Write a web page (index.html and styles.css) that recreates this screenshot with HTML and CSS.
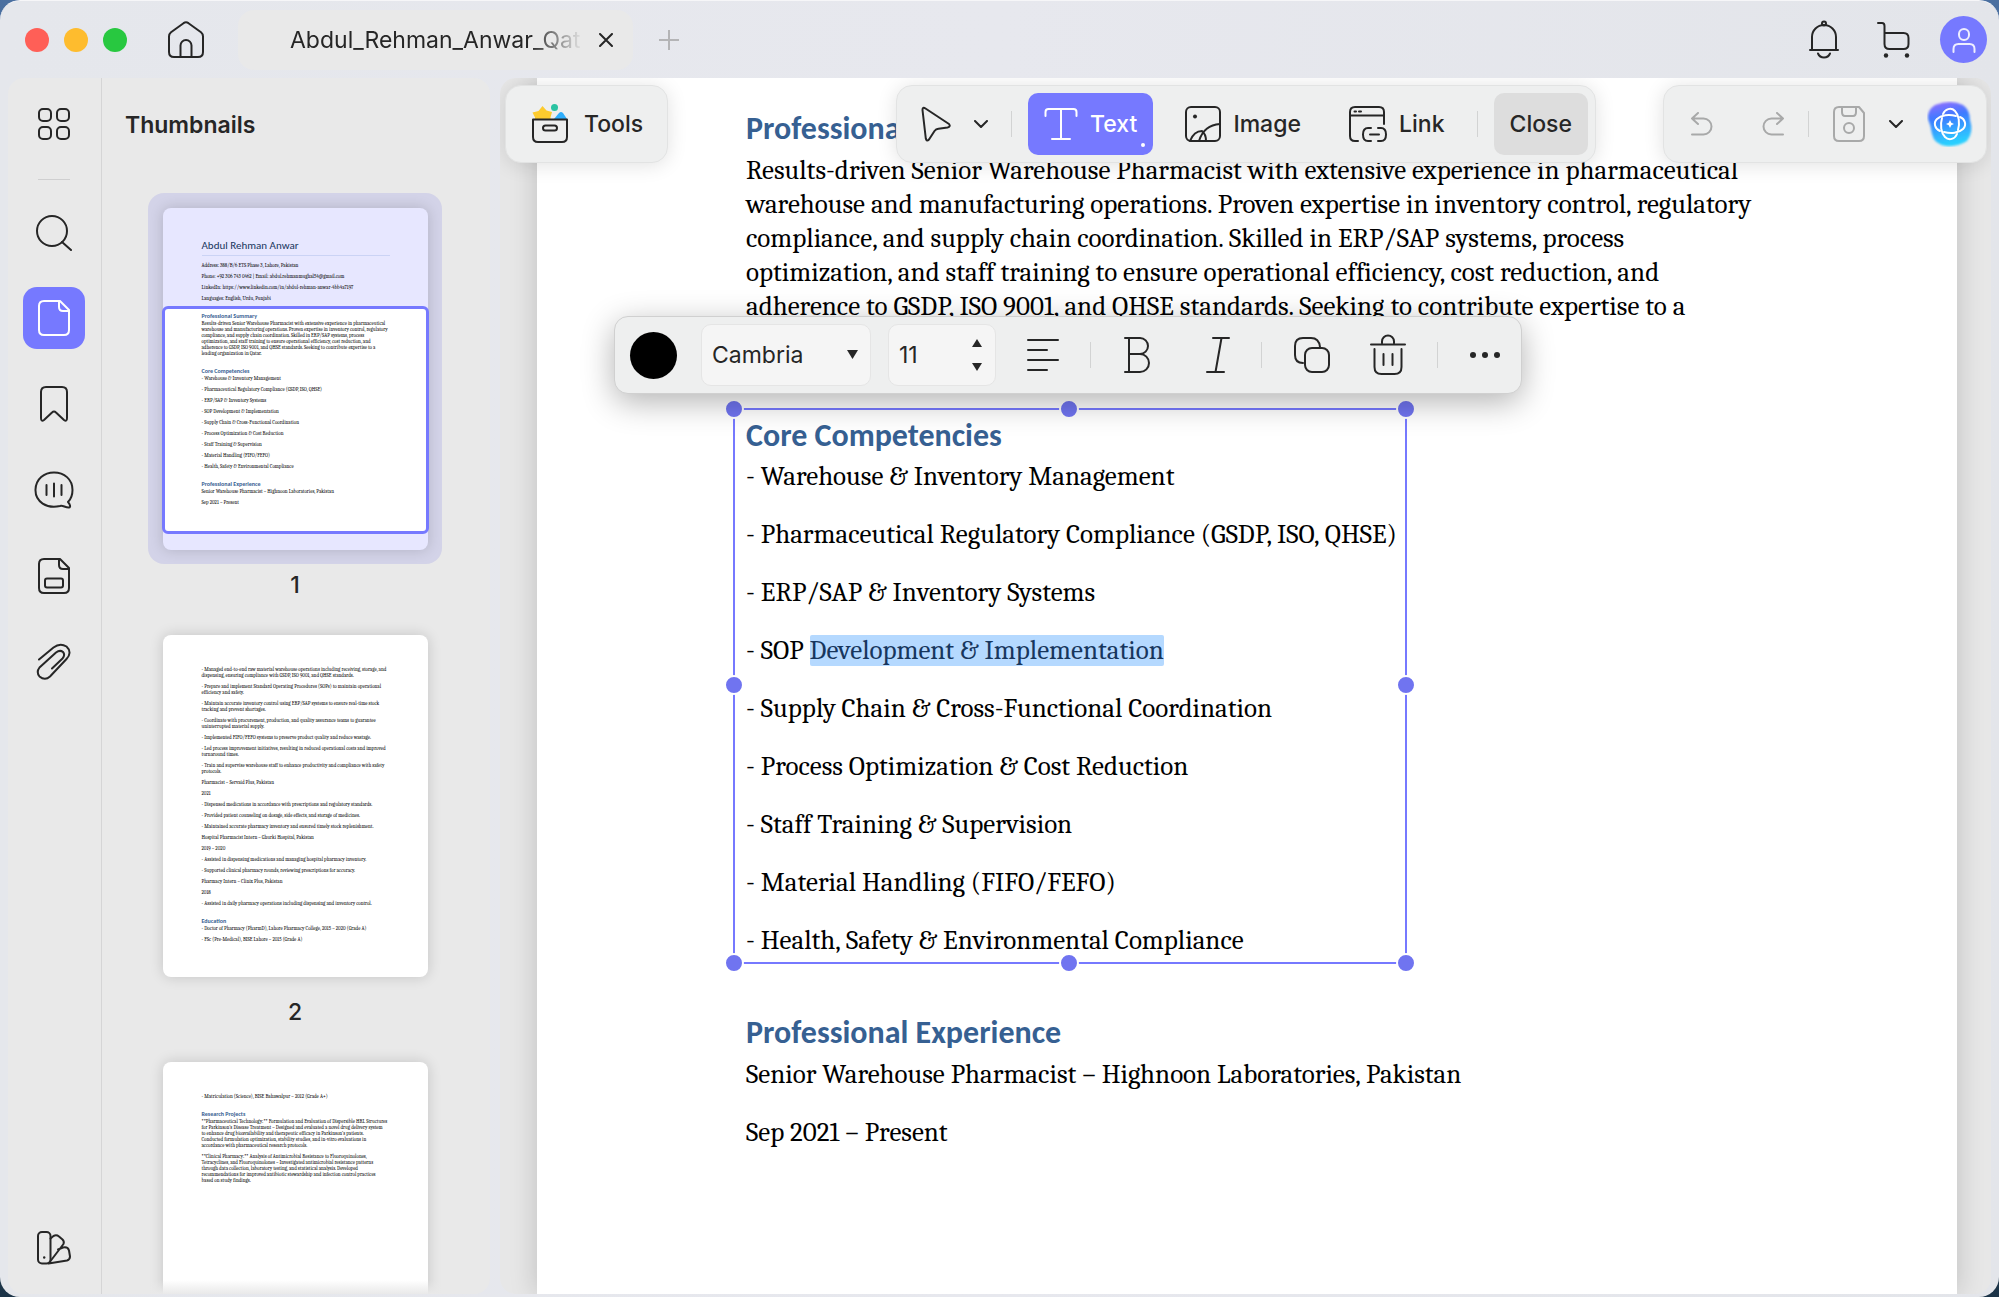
FILE: index.html
```html
<!DOCTYPE html>
<html lang="en">
<head>
    <meta charset="UTF-8">
    <title>Abdul_Rehman_Anwar_Qat</title>
    <link rel="stylesheet" href="styles.css">
</head>
<body>
<div class="window">

    <header class="titlebar">
        <div class="lights">
            <span class="light red"></span>
            <span class="light yellow"></span>
            <span class="light green"></span>
        </div>
        <button class="icon-btn home" aria-label="Home">
            <svg width="36" height="38" viewBox="0 0 36 38"><path d="M1 15.500Q1 13 3 11.300L15.500 2.200Q18 .5 20.500 2.200L33 11.300Q35 13 35 15.500V31Q35 36 30 36H6Q1 36 1 31ZM12.500 36V24.500a5.500 5.500 0 0 1 11 0V36"/></svg>
        </button>
        <div class="tab">
            <span class="tab-name">Abdul_Rehman_Anwar_Qat</span>
            <button class="icon-btn" aria-label="Close tab">
                <svg width="14" height="14" viewBox="0 0 14 14"><path d="M1 1l12 12M13 1L1 13"/></svg>
            </button>
        </div>
        <button class="icon-btn plus" aria-label="New tab">
            <svg width="20" height="20" viewBox="0 0 20 20"><path d="M10 0v20M0 10h20"/></svg>
        </button>
        <div class="account">
            <button class="icon-btn" aria-label="Notifications">
                <svg width="30" height="40" viewBox="0 0 30 40"><path d="M1 30h28M3 30V17a12 12 0 0 1 24 0v13M9 33.500a6.500 6.500 0 0 0 12 0"/><circle cx="15" cy="3.500" r="2"/></svg>
            </button>
            <button class="icon-btn" aria-label="Cart">
                <svg width="34" height="40" viewBox="0 0 34 40"><path d="M1 3h4q2.500 0 2.500 3v18q0 5 5 5h14q5 0 5-5v-6q0-5-5-5h-19"/><circle class="solid" cx="9" cy="35.500" r="2.200"/><circle class="solid" cx="30" cy="35.500" r="2.200"/></svg>
            </button>
            <button class="avatar" aria-label="Account">
                <svg width="24" height="26" viewBox="0 0 24 26"><rect x="7" y="2" width="10" height="11" rx="5"/><path d="M1.500 25v-3q0-5 5-5h11q5 0 5 5v3"/></svg>
            </button>
        </div>
    </header>

    <main class="workspace">

        <aside class="sidebar">
            <nav class="rail">
                <button class="rail-btn" aria-label="Apps">
                    <svg width="34" height="34" viewBox="0 0 34 34"><rect x="2" y="2" width="12" height="12" rx="4"/><rect x="20" y="2" width="12" height="12" rx="4"/><rect x="2" y="20" width="12" height="12" rx="4"/><rect x="20" y="20" width="12" height="12" rx="4"/></svg>
                </button>
                <span class="rail-line"></span>
                <button class="rail-btn" aria-label="Search">
                    <svg width="38" height="38" viewBox="0 0 38 38"><circle cx="17" cy="18" r="15"/><path d="M27 29l9 8"/></svg>
                </button>
                <button class="rail-btn selected" aria-label="Thumbnails">
                    <svg width="34" height="38" viewBox="0 0 34 38"><path d="M7 2h16l9 9v20q0 5-5 5H7q-5 0-5-5V7q0-5 5-5ZM22 2v6q0 4 4 4h6"/></svg>
                </button>
                <button class="rail-btn" aria-label="Bookmarks">
                    <svg width="30" height="38" viewBox="0 0 30 38"><path d="M2 7q0-5 5-5h16q5 0 5 5v26q0 4-3 2l-8-7.500q-2-2-4 0L5 35q-3 2-3-2Z"/></svg>
                </button>
                <button class="rail-btn" aria-label="Comments">
                    <svg width="40" height="38" viewBox="0 0 40 38"><path d="M34 31c2 2 3 5.500 1 5.500-4 .2-6-2.500-9-1.500C13 38 1 31 1.500 18.500 2 8 10 1.500 20 1.500S38.500 8 38.500 19c0 5-1.500 9-4.500 12ZM12.500 14v10M20 12.500v13M27.500 14v10"/></svg>
                </button>
                <button class="rail-btn" aria-label="Form fields">
                    <svg width="34" height="38" viewBox="0 0 34 38"><path d="M7 2h16l9 9v20q0 5-5 5H7q-5 0-5-5V7q0-5 5-5ZM22 2v6q0 4 4 4h6"/><rect x="8" y="21.500" width="18" height="9" rx="2"/></svg>
                </button>
                <button class="rail-btn" aria-label="Attachments">
                    <svg width="36" height="38" viewBox="0 0 36 38"><path d="M3 16.500L17.500 4.500Q24-.5 30.500 3.500c4.500 4 3.500 9 0 12.500L14 33.500q-5 4.500-10.500 0-3.500-4.500 0-9L20 9.500q4-3 7-.5 2.500 3-.5 6.500L16 25.500"/></svg>
                </button>
                <button class="rail-btn last" aria-label="Theme">
                    <svg width="36" height="36" viewBox="0 0 36 36"><rect x="2" y="2" width="12.500" height="31.500" rx="4"/><path d="M14.500 8.500l3-2.500q3-1.500 5.500.5l3.500 3q2 2 1 4.500L13 33M22 19.500l5-2q5-1 6 3l1 6q0 3-3 4L12.500 33.500"/><circle class="solid" cx="8.200" cy="27.500" r="1.200"/></svg>
                </button>
            </nav>

            <section class="thumbs">
                <h2>Thumbnails</h2>
                <div class="thumb-list">

                    <figure class="thumb current">
                        <div class="sheet">
                            <h3 class="name">Abdul Rehman Anwar</h3>
                            <p>Address: 388/B/6 ETS Phase 3, Lahore, Pakistan</p>
                            <p>Phone: +92 306 743 0462 | Email: abdul.rehmanmughal54@gmail.com</p>
                            <p>LinkedIn: https://www.linkedin.com/in/abdul-rehman-anwar-4bb4a7197</p>
                            <p>Languages: English, Urdu, Punjabi</p>
                            <div class="viewport">
                                <h4>Professional Summary</h4>
                                <p>Results-driven Senior Warehouse Pharmacist with extensive experience in pharmaceutical<br>
                                warehouse and manufacturing operations. Proven expertise in inventory control, regulatory<br>
                                compliance, and supply chain coordination. Skilled in ERP/SAP systems, process<br>
                                optimization, and staff training to ensure operational efficiency, cost reduction, and<br>
                                adherence to GSDP, ISO 9001, and QHSE standards. Seeking to contribute expertise to a<br>
                                leading organization in Qatar.</p>
                                <h4>Core Competencies</h4>
                                <p>- Warehouse &amp; Inventory Management</p>
                                <p>- Pharmaceutical Regulatory Compliance (GSDP, ISO, QHSE)</p>
                                <p>- ERP/SAP &amp; Inventory Systems</p>
                                <p>- SOP Development &amp; Implementation</p>
                                <p>- Supply Chain &amp; Cross-Functional Coordination</p>
                                <p>- Process Optimization &amp; Cost Reduction</p>
                                <p>- Staff Training &amp; Supervision</p>
                                <p>- Material Handling (FIFO/FEFO)</p>
                                <p>- Health, Safety &amp; Environmental Compliance</p>
                                <h4>Professional Experience</h4>
                                <p>Senior Warehouse Pharmacist – Highnoon Laboratories, Pakistan</p>
                                <p>Sep 2021 – Present</p>
                            </div>
                        </div>
                        <figcaption>1</figcaption>
                    </figure>

                    <figure class="thumb">
                        <div class="sheet">
                            <p>- Managed end-to-end raw material warehouse operations including receiving, storage, and<br>
                            dispensing, ensuring compliance with GSDP, ISO 9001, and QHSE standards.</p>
                            <p>- Prepare and implement Standard Operating Procedures (SOPs) to maintain operational<br>
                            efficiency and safety.</p>
                            <p>- Maintain accurate inventory control using ERP/SAP systems to ensure real-time stock<br>
                            tracking and prevent shortages.</p>
                            <p>- Coordinate with procurement, production, and quality assurance teams to guarantee<br>
                            uninterrupted material supply.</p>
                            <p>- Implemented FIFO/FEFO systems to preserve product quality and reduce wastage.</p>
                            <p>- Led process improvement initiatives, resulting in reduced operational costs and improved<br>
                            turnaround times.</p>
                            <p>- Train and supervise warehouse staff to enhance productivity and compliance with safety<br>
                            protocols.</p>
                            <p>Pharmacist – Servaid Plus, Pakistan</p>
                            <p>2021</p>
                            <p>- Dispensed medications in accordance with prescriptions and regulatory standards.</p>
                            <p>- Provided patient counseling on dosage, side effects, and storage of medicines.</p>
                            <p>- Maintained accurate pharmacy inventory and ensured timely stock replenishment.</p>
                            <p>Hospital Pharmacist Intern – Ghurki Hospital, Pakistan</p>
                            <p>2019 – 2020</p>
                            <p>- Assisted in dispensing medications and managing hospital pharmacy inventory.</p>
                            <p>- Supported clinical pharmacy rounds, reviewing prescriptions for accuracy.</p>
                            <p>Pharmacy Intern – Clinix Plus, Pakistan</p>
                            <p>2018</p>
                            <p>- Assisted in daily pharmacy operations including dispensing and inventory control.</p>
                            <h4>Education</h4>
                            <p>- Doctor of Pharmacy (PharmD), Lahore Pharmacy College, 2015 – 2020 (Grade A)</p>
                            <p>- FSc (Pre-Medical), BISE Lahore – 2015 (Grade A)</p>
                        </div>
                        <figcaption>2</figcaption>
                    </figure>

                    <figure class="thumb">
                        <div class="sheet">
                            <p>- Matriculation (Science), BISE Bahawalpur – 2012 (Grade A+)</p>
                            <h4>Research Projects</h4>
                            <p>**Pharmaceutical Technology:** Formulation and Evaluation of Dispersible HRL Structures<br>
                            for Parkinson's Disease Treatment – Designed and evaluated a novel drug delivery system<br>
                            to enhance drug bioavailability and therapeutic efficacy in Parkinson's patients.<br>
                            Conducted formulation optimization, stability studies, and in-vitro evaluations in<br>
                            accordance with pharmaceutical research protocols.</p>
                            <p>**Clinical Pharmacy:** Analysis of Antimicrobial Resistance to Fluoroquinolones,<br>
                            Tetracyclines, and Fluoroquinolones – Investigated antimicrobial resistance patterns<br>
                            through data collection, laboratory testing, and statistical analysis. Developed<br>
                            recommendations for improved antibiotic stewardship and infection control practices<br>
                            based on study findings.</p>
                        </div>
                    </figure>

                </div>
            </section>
        </aside>

        <section class="viewer">
            <article class="page">
                <h2>Professional Summary</h2>
                <p>Results-driven Senior Warehouse Pharmacist with extensive experience in pharmaceutical<br>
                warehouse and manufacturing operations. Proven expertise in inventory control, regulatory<br>
                compliance, and supply chain coordination. Skilled in ERP/SAP systems, process<br>
                optimization, and staff training to ensure operational efficiency, cost reduction, and<br>
                adherence to GSDP, ISO 9001, and QHSE standards. Seeking to contribute expertise to a<br>
                leading organization in Qatar.</p>

                <div class="selection">
                    <h2>Core Competencies</h2>
                    <p>- Warehouse &amp; Inventory Management</p>
                    <p>- Pharmaceutical Regulatory Compliance (GSDP, ISO, QHSE)</p>
                    <p>- ERP/SAP &amp; Inventory Systems</p>
                    <p>- SOP <mark>Development &amp; Implementation</mark></p>
                    <p>- Supply Chain &amp; Cross-Functional Coordination</p>
                    <p>- Process Optimization &amp; Cost Reduction</p>
                    <p>- Staff Training &amp; Supervision</p>
                    <p>- Material Handling (FIFO/FEFO)</p>
                    <p>- Health, Safety &amp; Environmental Compliance</p>
                    <span class="handle top start"></span>
                    <span class="handle top center"></span>
                    <span class="handle top end"></span>
                    <span class="handle middle start"></span>
                    <span class="handle middle end"></span>
                    <span class="handle bottom start"></span>
                    <span class="handle bottom center"></span>
                    <span class="handle bottom end"></span>

                    <!-- text format bar, floats above the selected block -->
                    <div class="format-bar">
                        <button class="swatch" aria-label="Text color"></button>
                        <label class="field font-field">
                            <select aria-label="Font">
                                <option>Cambria</option>
                            </select>
                            <svg width="14" height="12" viewBox="0 0 14 12"><path class="solid" d="M1 1h11L6.500 10Z"/></svg>
                        </label>
                        <div class="field size-field">
                            <input type="text" value="11" aria-label="Font size">
                            <div class="steps">
                                <button class="icon-btn" aria-label="Increase size"><svg width="12" height="10" viewBox="0 0 12 10"><path class="solid" d="M1 9h10L6 1Z"/></svg></button>
                                <button class="icon-btn" aria-label="Decrease size"><svg width="12" height="10" viewBox="0 0 12 10"><path class="solid" d="M1 1h10L6 9Z"/></svg></button>
                            </div>
                        </div>
                        <button class="icon-btn" aria-label="Align">
                            <svg width="32" height="34" viewBox="0 0 32 34"><path d="M1 2h30M1 12h19M1 22h30M1 32h19"/></svg>
                        </button>
                        <span class="split"></span>
                        <button class="icon-btn bold" aria-label="Bold">
                            <svg width="28" height="36" viewBox="0 0 28 36"><path d="M1 1h15a8 8 0 0 1 0 16H5M5 1v34M16 17a9 9 0 0 1 0 18H1"/></svg>
                        </button>
                        <button class="icon-btn" aria-label="Italic">
                            <svg width="24" height="36" viewBox="0 0 24 36"><path d="M7 1h16M1 35h17M15.500 1L9.500 35"/></svg>
                        </button>
                        <span class="split"></span>
                        <button class="icon-btn copy" aria-label="Duplicate">
                            <svg width="38" height="38" viewBox="0 0 38 38"><path d="M10 27Q2 27 2 19V10q0-8 8-8h8q8 0 9 9"/><rect x="12" y="12" width="24" height="24" rx="7"/></svg>
                        </button>
                        <button class="icon-btn" aria-label="Delete">
                            <svg width="36" height="42" viewBox="0 0 36 42"><path d="M1 10.500h34M12 9V7.500a6 6 0 0 1 12 0V9M4.500 15v18q0 7 7 7h13q7 0 7-7V15M13.500 20v11M22.500 20v11"/></svg>
                        </button>
                        <span class="split"></span>
                        <button class="icon-btn" aria-label="More">
                            <svg width="32" height="8" viewBox="0 0 32 8"><circle class="solid" cx="4" cy="4" r="3"/><circle class="solid" cx="16" cy="4" r="3"/><circle class="solid" cx="28" cy="4" r="3"/></svg>
                        </button>
                    </div>
                </div>

                <h2>Professional Experience</h2>
                <p>Senior Warehouse Pharmacist – Highnoon Laboratories, Pakistan</p>
                <p>Sep 2021 – Present</p>
            </article>

            <div class="bars">
                <button class="bar tools">
                    <svg width="36" height="40" viewBox="0 0 36 40">
                        <path fill="#fdcb2e" stroke="none" d="M10.500 2l4 4.500 5.500 1.500-1.500 5.500V16H3l0-2.500L.500 8.500l6-1.500Z"/>
                        <circle fill="#2ac3a2" stroke="none" cx="22.500" cy="3.500" r="3.500"/>
                        <path fill="#2eaefc" stroke="none" d="M22 15l5-6q2-2 4 0l4 6Z"/>
                        <path d="M1 15.500h34V33q0 5-5 5H6q-5 0-5-5Z"/><rect x="11" y="21.500" width="14" height="5" rx="2.500"/>
                    </svg>
                    Tools
                </button>

                <div class="bar edit-bar">
                    <button class="icon-btn" aria-label="Select">
                        <svg width="30" height="36" viewBox="0 0 30 36"><path d="M1.500 4q0-3.500 3-1.500L28 18q2 2.500-1.500 3.500l-9 1.200q-2.500.3-4 2.300L8 33.500q-2.500 2.500-3.200-1Z"/></svg>
                    </button>
                    <button class="icon-btn" aria-label="Select options">
                        <svg width="14" height="8" viewBox="0 0 14 8"><path d="M1 1l6 6 6-6"/></svg>
                    </button>
                    <span class="split"></span>
                    <div class="tool-group">
                        <button class="tool on">
                            <svg width="34" height="34" viewBox="0 0 34 34"><path d="M1.500 9V5q0-3 3-3h25q3 0 3 3v4M17 2v30M8 32h18"/></svg>
                            Text
                        </button>
                        <button class="tool">
                            <svg width="36" height="36" viewBox="0 0 36 36"><rect x="1" y="1" width="34" height="34" rx="5"/><circle class="solid" cx="10" cy="10.500" r="2"/><path d="M5 35Q9 25 17 25q4 3 4 10M14 35Q19 19 35 18"/></svg>
                            Image
                        </button>
                        <button class="tool">
                            <svg width="38" height="36" viewBox="0 0 38 36"><path d="M9 35H6q-5 0-5-5V6q0-5 5-5h24q5 0 5 5v12M1 9.500h34M5.500 5.500H7M10 5.500h2M22 35h-3q-5 0-5-6.500t5-6.500h3M29 22h3q5 0 5 6.500T32 35h-3M21 28.500h9"/></svg>
                            Link
                        </button>
                    </div>
                    <span class="split"></span>
                    <button class="tool close">Close</button>
                </div>

                <div class="bar file-bar">
                    <button class="icon-btn dim undo" aria-label="Undo">
                        <svg width="24" height="24" viewBox="0 0 24 24"><path d="M7 1L1 6.500 7 12M1 6.500h11.500a8 8 0 0 1 0 16H1"/></svg>
                    </button>
                    <button class="icon-btn dim" aria-label="Redo">
                        <svg width="24" height="24" viewBox="0 0 24 24"><path d="M17 1l6 5.500-6 5.500M23 6.500H11.500a8 8 0 0 0 0 16H23"/></svg>
                    </button>
                    <span class="split"></span>
                    <button class="icon-btn dim" aria-label="Save">
                        <svg width="32" height="36" viewBox="0 0 32 36"><path d="M6 1h20l5 6v23q0 5-5 5H6q-5 0-5-5V6q0-5 5-5ZM9 1v5q0 4 3 4h8q3 0 3-4V1"/><circle cx="16" cy="22" r="5"/></svg>
                    </button>
                    <button class="icon-btn" aria-label="Save options">
                        <svg width="14" height="8" viewBox="0 0 14 8"><path d="M1 1l6 6 6-6"/></svg>
                    </button>
                    <button class="icon-btn" aria-label="AI assistant">
                        <svg width="46" height="46" viewBox="0 0 46 46">
                            <defs>
                                <linearGradient id="aiFill" x1="0" y1="0" x2="0.2" y2="1">
                                    <stop offset="0" stop-color="#9a6cff"/>
                                    <stop offset="0.400" stop-color="#3d7bff"/>
                                    <stop offset="1" stop-color="#2bd0ff"/>
                                </linearGradient>
                                <filter id="aiSoft"><feGaussianBlur stdDeviation="0.800"/></filter>
                            </defs>
                            <path fill="url(#aiFill)" stroke="none" filter="url(#aiSoft)" d="M8 4Q24-2 36 4q7 5 7 15 4 12-3 21-9 6-21 5Q7 43 5 33 4 25 1 18 0 9 8 4Z"/>
                            <g class="orbit">
                                <path d="M16 13c2-5 8-7 12-3 4 4 5 12 3 19"/>
                                <path d="M33 16c5 2 7 8 3 12-4 4-12 5-19 3"/>
                                <path d="M30 33c-2 5-8 7-12 3-4-4-5-12-3-19"/>
                                <path d="M13 30c-5-2-7-8-3-12 4-4 12-5 19-3"/>
                            </g>
                            <path fill="#fff" stroke="none" d="M23 19l1.300 2.700L27 23l-2.700 1.300L23 27l-1.300-2.700L19 23l2.700-1.300Z"/>
                        </svg>
                    </button>
                </div>
            </div>
        </section>

    </main>
</div>
</body>
</html>
```

FILE: styles.css
```css
* {
    box-sizing: border-box;
}

body {
    margin: 0;
    font-family: Inter, "Liberation Sans", sans-serif;
    font-size: 23px;
    color: #262626;
    background: linear-gradient(#4a6fa0, #1c3448);
}

h2, h3, h4, p, figure {
    margin: 0;
}

button {
    font: inherit;
    color: inherit;
    background: none;
    border: none;
    padding: 0;
}

svg {
    display: block;
    flex-shrink: 0;
    fill: none;
    stroke: currentColor;
    stroke-width: 2;
    stroke-linecap: round;
    stroke-linejoin: round;
}

.solid {
    fill: currentColor;
    stroke: none;
}

.icon-btn {
    display: flex;
    align-items: center;
    justify-content: center;
}

.window {
    height: 100vh;
    display: flex;
    flex-direction: column;
    overflow: hidden;
    border-radius: 20px;
    border-top: 1px solid #f6f6f8;
    background: linear-gradient(90deg, #e5e7ec, #e7e8ee 50%, #e3e5ea);
}

/* title bar */
.titlebar {
    display: flex;
    align-items: center;
    flex-shrink: 0;
    height: 77px;
    padding: 0 12px 0 25px;
}

.lights {
    display: flex;
    gap: 15px;
}

.light {
    width: 24px;
    height: 24px;
    border-radius: 50%;
}

.red { background: #ff5f57; }
.yellow { background: #febc2e; }
.green { background: #28c840; }

.home {
    margin: 0 34px 0 41px;
}

.tab {
    display: flex;
    align-items: center;
    gap: 16px;
    width: 395px;
    height: 60px;
    padding: 0 20px 0 52px;
    border-radius: 16px;
    background: #e9e9e9;
}

.tab-name {
    flex: 1;
    white-space: nowrap;
    -webkit-mask-image: linear-gradient(90deg, #000 82%, transparent);
    mask-image: linear-gradient(90deg, #000 82%, transparent);
}

.plus {
    margin-left: 26px;
    color: #b4b4b6;
}

.account {
    display: flex;
    align-items: center;
    gap: 38px;
    margin-left: auto;
}

.avatar {
    display: flex;
    align-items: center;
    justify-content: center;
    width: 47px;
    height: 47px;
    margin-left: -9px;
    border-radius: 50%;
    color: #eeeeff;
    background: #7679ff;
}

/* sidebar */
.workspace {
    display: flex;
    flex: 1;
    gap: 10px;
    min-height: 0;
    padding: 0 8px 3px;
}

.sidebar {
    display: flex;
    width: 482px;
    flex-shrink: 0;
    overflow: hidden;
    border-radius: 16px;
    background: #e9e9e9;
}

.rail {
    display: flex;
    flex-direction: column;
    align-items: center;
    gap: 24px;
    width: 94px;
    padding: 15px 2px 15px 0;
    border-right: 1px solid #d5d5d6;
}

.rail-btn {
    display: flex;
    align-items: center;
    justify-content: center;
    flex-shrink: 0;
    width: 62px;
    height: 62px;
    border-radius: 14px;
}

.rail-line {
    width: 32px;
    height: 1px;
    margin-bottom: -3px;
    background: #cfcfd0;
}

.selected {
    color: #fff;
    background: #7679ff;
}

.last {
    margin-top: auto;
}

.thumbs {
    position: relative;
    flex: 1;
    overflow: hidden;
}

.thumbs::after {
    content: "";
    position: absolute;
    left: 0;
    right: 0;
    bottom: 0;
    height: 14px;
    background: linear-gradient(transparent, #e9e9e9);
}

.thumbs h2 {
    padding: 30px 23px 0;
    font-size: 23px;
    font-weight: 600;
    line-height: 34px;
}

.thumb-list {
    display: flex;
    flex-direction: column;
    align-items: center;
    margin-top: 51px;
    padding-right: 2px;
}

.thumb {
    display: flex;
    flex-direction: column;
    align-items: center;
    width: 294px;
    padding: 15px;
    border-radius: 16px;
}

.thumb figcaption {
    height: 40px;
    margin-top: 16px;
    margin-bottom: -1px;
    font-weight: 500;
    line-height: 38px;
}

.current {
    height: 371px;
    margin-bottom: 56px;
    background: #d3d3e8;
}

.sheet {
    flex-shrink: 0;
    width: 265px;
    height: 342px;
    padding: 31px 0 0 39px;
    border-radius: 8px;
    overflow: hidden;
    background: #fff;
    box-shadow: 0 0 14px rgba(0, 0, 0, 0.16);
    font: 5px/6px Cambria, "Liberation Serif", serif;
    color: #000;
    white-space: nowrap;
}

.sheet p {
    margin-bottom: 5px;
}

.sheet h4 {
    margin-top: 12px;
    font: bold 6px/7px Calibri, Lato, sans-serif;
    color: #366092;
}

.current .sheet {
    padding-top: 30px;
    overflow: visible;
    background: #e7e7ff;
}

.sheet .name {
    width: 188px;
    margin-bottom: 6px;
    padding-bottom: 2px;
    border-bottom: 1px solid #cbd3f5;
    font: 11px/15px Calibri, Lato, sans-serif;
    color: #17365d;
}

.viewport {
    width: 267px;
    height: 228px;
    margin: 0 0 0 -40px;
    padding: 4px 0 0 37px;
    border: 3px solid #7679ff;
    border-radius: 6px;
    background: #fff;
}

.viewport h4:first-child {
    margin-top: 0;
}

/* document */
.viewer {
    position: relative;
    flex: 1;
    min-width: 0;
    overflow: hidden;
    padding: 0 34px 0 37px;
    border-radius: 16px;
    background: #e7e7e7;
}

.page {
    height: 100%;
    padding: 31px 0 0 209px;
    background: #fff;
    box-shadow: 0 0 26px rgba(0, 0, 0, 0.18);
    font-family: Cambria, "Liberation Serif", serif;
    font-size: 27px;
    line-height: 34px;
    color: #000;
    white-space: nowrap;
}

.page h2 {
    margin-bottom: 5px;
    font: bold 32px/40px Calibri, Lato, sans-serif;
    color: #366092;
}

.page p + p {
    margin-top: 24px;
}

.selection {
    position: relative;
    width: 674px;
    margin: 50px 0 49px -13px;
    padding: 6px 11px 4px;
    border: 2px solid #7679ff;
}

.selection h2 {
    margin-bottom: 4px;
}

mark {
    border-radius: 2px;
    color: #17365d;
    background: #b5d9ff;
}

.handle {
    position: absolute;
    width: 20px;
    height: 20px;
    margin: -11px;
    border: 2px solid #fff;
    border-radius: 50%;
    background: #7074f0;
}

.top { top: 0; }
.middle { top: 50%; }
.bottom { top: calc(100% + 2px); }
.start { left: 0; }
.center { left: 50%; }
.end { left: calc(100% + 2px); }

.format-bar {
    position: absolute;
    left: 50%;
    bottom: calc(100% + 16px);
    display: flex;
    align-items: center;
    gap: 31px;
    width: 908px;
    height: 78px;
    margin-left: -456px;
    padding: 0 15px;
    border: 1px solid #d0d0d0;
    border-radius: 14px;
    background: #eeefef;
    box-shadow: 0 8px 32px rgba(0, 0, 0, 0.3);
    font: 23px/28px Inter, "Liberation Sans", sans-serif;
    color: #262626;
}

.swatch {
    width: 47px;
    height: 47px;
    margin-right: -7px;
    border-radius: 50%;
    background: #000;
}

.field {
    display: flex;
    align-items: center;
    height: 62px;
    border: 1px solid #e5e5e5;
    border-radius: 10px;
    background: #f5f5f5;
}

.field select,
.field input {
    flex: 1;
    min-width: 0;
    padding: 0;
    border: none;
    outline: none;
    appearance: none;
    background: none;
    font: inherit;
    color: inherit;
}

.font-field {
    width: 170px;
    margin-right: -14px;
    padding: 0 10px;
}

.size-field {
    width: 108px;
    padding: 0 12px 0 10px;
}

.steps {
    display: flex;
    flex-direction: column;
    gap: 14px;
}

.bold {
    margin: 0 23px 0 2px;
}

.copy {
    margin-right: 8px;
}

.split {
    width: 1px;
    height: 26px;
    background: #d2d3d3;
}

/* floating bars over the document */
.bars {
    position: absolute;
    top: 7px;
    left: 5px;
    right: 4px;
    display: grid;
    grid-template-columns: 1fr auto 1fr;
}

.bar {
    display: flex;
    align-items: center;
    height: 78px;
    border: 1px solid #e2e3e3;
    border-radius: 16px;
    background: #eeefef;
    box-shadow: 0 2px 20px rgba(0, 0, 0, 0.12);
}

.tools {
    justify-self: start;
    gap: 16px;
    padding: 0 24px 0 26px;
    font-weight: 500;
}

.edit-bar {
    gap: 23px;
    width: 700px;
    padding: 0 7px 0 24px;
}

.tool-group {
    display: flex;
    flex: 1;
    justify-content: space-between;
    margin: 0 -7px;
}

.tool {
    position: relative;
    display: flex;
    align-items: center;
    gap: 12px;
    height: 62px;
    padding: 0 16px;
    border-radius: 10px;
    font-weight: 500;
}

.on {
    color: #fff;
    background: #7679ff;
}

.on::after {
    content: "";
    position: absolute;
    right: 8px;
    bottom: 8px;
    width: 4px;
    height: 4px;
    border-radius: 50%;
    background: #fff;
}

.close {
    margin-left: -7px;
    background: #dddddd;
}

.file-bar {
    justify-self: end;
    gap: 24px;
    padding: 0 13px 0 27px;
}

.undo {
    margin-right: 21px;
}

.dim {
    color: #a8a9a9;
}

.orbit {
    stroke: #fff;
}
```
